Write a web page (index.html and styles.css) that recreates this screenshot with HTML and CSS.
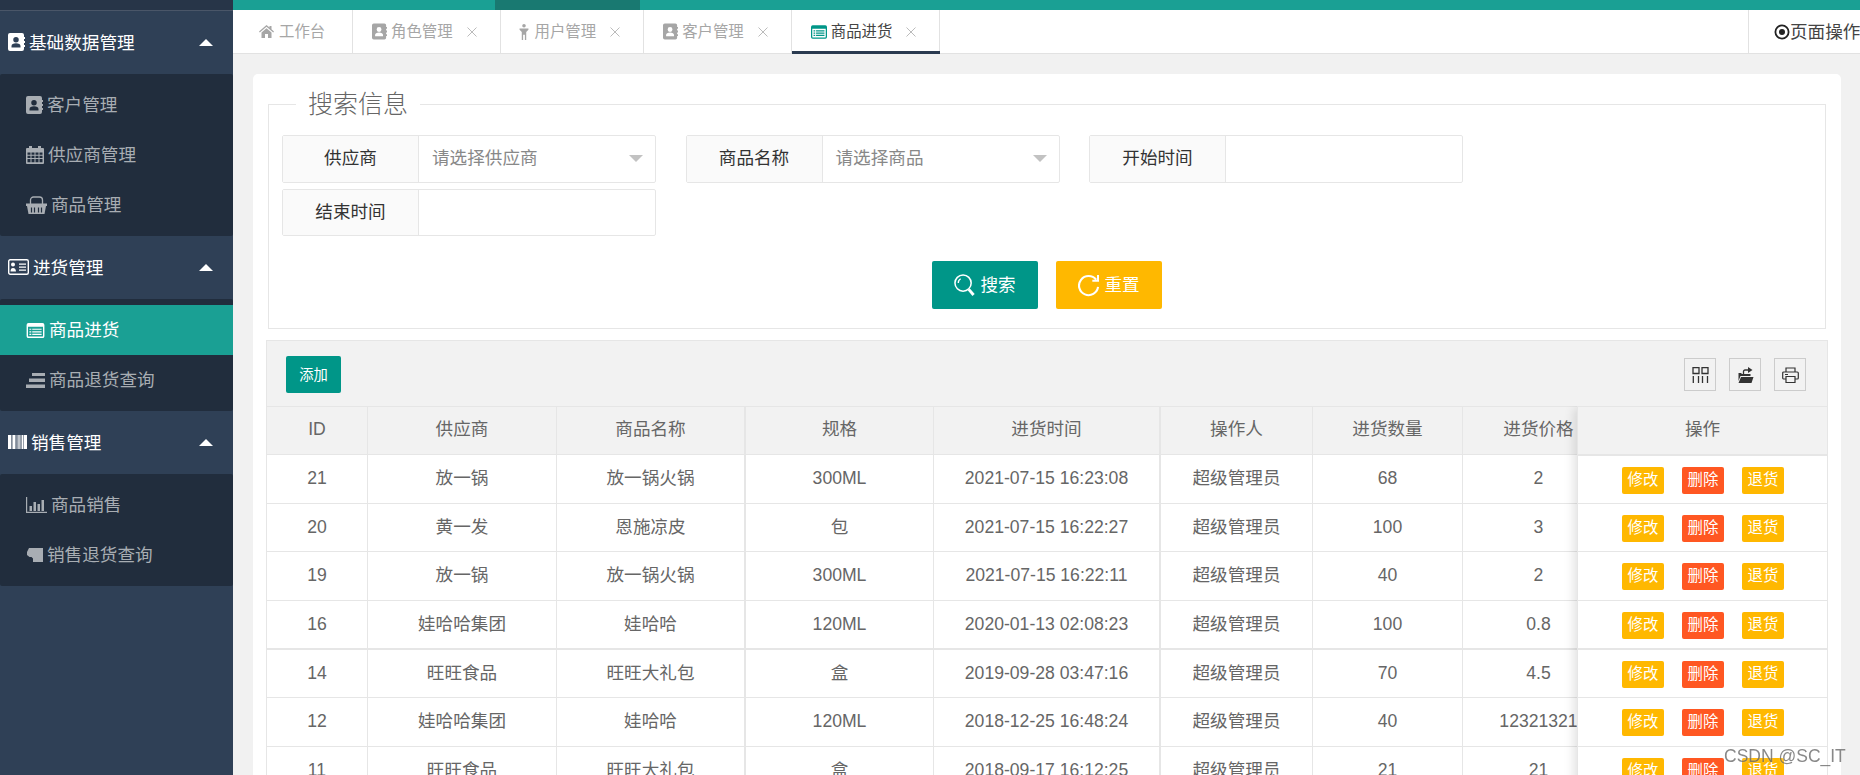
FILE: index.html
```html
<!DOCTYPE html>
<html lang="zh-CN">
<head>
<meta charset="utf-8">
<title>商品进货</title>
<link rel="stylesheet" href="styles.css">
</head>
<body>
<svg class="sprite" xmlns="http://www.w3.org/2000/svg">
  <symbol id="i-book" viewBox="0 0 17 18"><path fill-rule="evenodd" d="M2 0h12a2 2 0 0 1 2 2v2h1v2h-1v2h1v2h-1v2h1v2h-1v2a2 2 0 0 1-2 2H2a2 2 0 0 1-2-2V2a2 2 0 0 1 2-2zM8 4a2.6 2.6 0 0 0 0 5.500A2.600 2.600 0 0 0 8 4zM3.500 14.500h9V13c0-1.800-1.800-2.800-4.500-2.800S3.500 11.200 3.500 13z"/></symbol>
  <symbol id="i-cal" viewBox="0 0 18 18"><path fill-rule="evenodd" d="M3 0h3v2h6V0h3v2h2a1 1 0 0 1 1 1v14a1 1 0 0 1-1 1H1a1 1 0 0 1-1-1V3a1 1 0 0 1 1-1h2zM1.500 6.500v2.200h3V6.500zM5.500 6.500v2.200h3V6.500zM9.500 6.500v2.200h3V6.500zM13.500 6.500v2.200h3V6.500zM1.500 9.700v2.400h3V9.700zM5.500 9.700v2.400h3V9.700zM9.500 9.700v2.400h3V9.700zM13.500 9.700v2.400h3V9.700zM1.500 13.100v3.200h3v-3.200zM5.500 13.100v3.200h3v-3.200zM9.500 13.100v3.200h3v-3.200zM13.500 13.100v3.200h3v-3.200z"/></symbol>
  <symbol id="i-basket" viewBox="0 0 21 18"><path d="M0 7.500h21v2.500h-1l-1.500 8H2.500L1 10H0z"/><path d="M4.500 8V4a3 3 0 0 1 3-3h6a3 3 0 0 1 3 3v4" fill="none" stroke="currentColor" stroke-width="1.300"/><path d="M5.500 11.500v5M8.500 11.500v5M12.500 11.500v5M15.500 11.500v5" stroke="#212d3d" stroke-width="1.200"/></symbol>
  <symbol id="i-idcard" viewBox="0 0 21 16"><rect x=".7" y=".7" width="19.600" height="14.600" rx="1.500" fill="none" stroke="currentColor" stroke-width="1.400"/><path d="M3 5.500a2 2 0 1 1 4 0 2 2 0 0 1-4 0zM2.500 12.500c0-2.500 1-3.500 2.500-3.500s3 1 3 3.500zM11 4.500h7v1.300h-7zM11 7.500h7v1.300h-7zM11 10.500h7v1.300h-7z"/></symbol>
  <symbol id="i-list" viewBox="0 0 19 16"><path fill-rule="evenodd" d="M2 0h15a2 2 0 0 1 2 2v12a2 2 0 0 1-2 2H2a2 2 0 0 1-2-2V2a2 2 0 0 1 2-2zM1.500 4v9.500a1 1 0 0 0 1 1h14a1 1 0 0 0 1-1V4zM3 6h2v1.300H3zM6 6h10v1.300H6zM3 8.700h2V10H3zM6 8.700h10V10H6zM3 11.400h2v1.300H3zM6 11.400h10v1.300H6z"/></symbol>
  <symbol id="i-stack" viewBox="0 0 19 15"><path d="M6 0h13v3H6zM3 5.500h16v3.500H3zM0 11.500h19V15H0z"/></symbol>
  <symbol id="i-barcode" viewBox="0 0 19 14"><path d="M0 0h3v14H0zM3.600 0h1v14h-1zM5 0h2v14H5zM7.500 0h.7v14h-.7zM8.800 0h.7v14h-.7zM10 0h.7v14H10zM11.300 0h.7v14h-.7zM12.500 0h1v14h-1zM14 0h1.500v14H14zM16 0h3v14h-3z"/></symbol>
  <symbol id="i-chart" viewBox="0 0 21 16"><path d="M0 0h1.200v14.800H21V16H0zM3.500 9h2.500v5H3.500zM7.500 5h2.500v9H7.500zM11.500 7h2.500v7h-2.500zM15.500 3h2.500v11h-2.500z"/></symbol>
  <symbol id="i-ticket" viewBox="0 0 17 14"><path d="M3 0h14v14H7v-3.500L5.500 9H3.500L1 7V4l1-2z"/></symbol>
  <symbol id="i-home" viewBox="0 0 15 13"><path d="M7.500 0l3 2.600V1h2v3.300L15 6.500l-.8 1-6.700-5.700L.8 7.500 0 6.500zM2.500 7.500l5-4.300 5 4.300V13H9V9H6v4H2.500z"/></symbol>
  <symbol id="i-male" viewBox="0 0 10 18"><circle cx="5" cy="2" r="2"/><path d="M0 5h10v1.500L7.500 9v9H6v-6H4v6H2.500V9L0 6.500z"/></symbol>
  <symbol id="i-cols" viewBox="0 0 16 16"><path d="M.5.500h6v6h-6zM9.500.500h6v6h-6zM.8 9v7M6 9v7M10 9v7M15 9v7" fill="none" stroke="currentColor" stroke-width="1.300"/></symbol>
  <symbol id="i-export" viewBox="0 0 16 16"><path d="M1 6h3v1h9v2H3l-2 5zM3.500 10H16l-2 6H1z"/><path d="M6 7V4.500A1.500 1.500 0 0 1 7.500 3H12" fill="none" stroke="currentColor" stroke-width="1.300"/><path d="M10.500 0L15 3l-4.500 3z"/></symbol>
  <symbol id="i-print" viewBox="0 0 17 16"><path d="M4 5V1h9v4M4 12H1.500A1 1 0 0 1 .7 11V6a1 1 0 0 1 1-1h13.600a1 1 0 0 1 1 1v5a1 1 0 0 1-1 1H13M4 9.500h9v6H4zM3 7.500h3" fill="none" stroke="currentColor" stroke-width="1.200"/></symbol>
  <symbol id="i-search" viewBox="0 0 22 24"><circle cx="9.500" cy="10" r="8.500" fill="none" stroke="currentColor" stroke-width="1.600"/><path d="M4.500 10a5 5 0 0 1 2.500-4.500" fill="none" stroke="currentColor" stroke-width="1.400"/><path d="M15.500 16.500l5 6" stroke="currentColor" stroke-width="3"/></symbol>
  <symbol id="i-reset" viewBox="0 0 22 24"><path d="M19 6.500A10 10 0 1 0 21 14" fill="none" stroke="currentColor" stroke-width="2.200"/><path d="M15 7.500h6v-6" fill="none" stroke="currentColor" stroke-width="2.200"/></symbol>
  <symbol id="i-radio" viewBox="0 0 16 16"><circle cx="8" cy="8" r="6.600" fill="none" stroke="currentColor" stroke-width="1.800"/><circle cx="8" cy="8" r="3"/></symbol>
  <symbol id="i-close" viewBox="0 0 10 10"><path d="M.5.500l9 9M9.500.500l-9 9" fill="none" stroke="currentColor" stroke-width="1"/></symbol>
</svg>

<div class="app">
  <aside class="sidebar">
    <div class="brand"></div>

    <div class="group-head"><svg class="ico ico-book"><use href="#i-book"/></svg><span>基础数据管理</span><i class="caret"></i></div>
    <ul class="sub">
      <li class="sub-item"><svg class="ico ico-sub-book"><use href="#i-book"/></svg>客户管理</li>
      <li class="sub-item"><svg class="ico ico-sub-cal"><use href="#i-cal"/></svg>供应商管理</li>
      <li class="sub-item"><svg class="ico ico-sub-basket"><use href="#i-basket"/></svg>商品管理</li>
    </ul>

    <div class="group-head"><svg class="ico ico-idcard"><use href="#i-idcard"/></svg><span>进货管理</span><i class="caret"></i></div>
    <ul class="sub">
      <li class="sub-item is-active"><svg class="ico ico-sub-list"><use href="#i-list"/></svg>商品进货</li>
      <li class="sub-item"><svg class="ico ico-sub-list"><use href="#i-stack"/></svg>商品退货查询</li>
    </ul>

    <div class="group-head"><svg class="ico ico-barcode"><use href="#i-barcode"/></svg><span>销售管理</span><i class="caret"></i></div>
    <ul class="sub">
      <li class="sub-item"><svg class="ico ico-sub-chart"><use href="#i-chart"/></svg>商品销售</li>
      <li class="sub-item"><svg class="ico ico-sub-ticket"><use href="#i-ticket"/></svg>销售退货查询</li>
    </ul>
  </aside>

  <main class="main">
    <div class="topbar"><span class="topbar-active"></span></div>
    <nav class="tabs">
      <div class="tab tab-home"><svg class="tab-ico tab-ico-home"><use href="#i-home"/></svg>工作台</div>
      <div class="tab"><svg class="tab-ico tab-ico-book"><use href="#i-book"/></svg>角色管理<svg class="tab-x"><use href="#i-close"/></svg></div>
      <div class="tab tab-user"><svg class="tab-ico tab-ico-male"><use href="#i-male"/></svg>用户管理<svg class="tab-x"><use href="#i-close"/></svg></div>
      <div class="tab"><svg class="tab-ico tab-ico-book"><use href="#i-book"/></svg>客户管理<svg class="tab-x"><use href="#i-close"/></svg></div>
      <div class="tab is-current"><svg class="tab-ico tab-ico-list"><use href="#i-list"/></svg>商品进货<svg class="tab-x"><use href="#i-close"/></svg></div>
      <div class="page-ops"><svg class="ops-ico"><use href="#i-radio"/></svg>页面操作</div>
    </nav>

    <div class="content">
      <section class="card">
        <fieldset class="search">
          <legend>搜索信息</legend>
          <div class="search-grid">
            <div class="field"><label>供应商</label><div class="control">请选择供应商<i class="arrow"></i></div></div>
            <div class="field"><label>商品名称</label><div class="control">请选择商品<i class="arrow"></i></div></div>
            <div class="field"><label>开始时间</label><div class="control"></div></div>
            <div class="field"><label>结束时间</label><div class="control"></div></div>
          </div>
          <div class="search-actions">
            <button class="btn btn-teal"><svg class="btn-ico"><use href="#i-search"/></svg>搜索</button>
            <button class="btn btn-amber"><svg class="btn-ico"><use href="#i-reset"/></svg>重置</button>
          </div>
        </fieldset>

        <div class="grid-box">
          <div class="toolbar">
            <button class="add">添加</button>
            <div class="tools">
              <span class="tool"><svg><use href="#i-cols"/></svg></span>
              <span class="tool"><svg><use href="#i-export"/></svg></span>
              <span class="tool"><svg><use href="#i-print"/></svg></span>
            </div>
          </div>
          <div class="grid-body">
            <div class="row row-head"><div>ID</div><div>供应商</div><div>商品名称</div><div>规格</div><div>进货时间</div><div>操作人</div><div>进货数量</div><div>进货价格</div></div>
            <div class="row"><div>21</div><div>放一锅</div><div>放一锅火锅</div><div>300ML</div><div>2021-07-15 16:23:08</div><div>超级管理员</div><div>68</div><div>2</div></div>
            <div class="row"><div>20</div><div>黄一发</div><div>恩施凉皮</div><div>包</div><div>2021-07-15 16:22:27</div><div>超级管理员</div><div>100</div><div>3</div></div>
            <div class="row"><div>19</div><div>放一锅</div><div>放一锅火锅</div><div>300ML</div><div>2021-07-15 16:22:11</div><div>超级管理员</div><div>40</div><div>2</div></div>
            <div class="row row-strong"><div>16</div><div>娃哈哈集团</div><div>娃哈哈</div><div>120ML</div><div>2020-01-13 02:08:23</div><div>超级管理员</div><div>100</div><div>0.8</div></div>
            <div class="row"><div>14</div><div>旺旺食品</div><div>旺旺大礼包</div><div>盒</div><div>2019-09-28 03:47:16</div><div>超级管理员</div><div>70</div><div>4.5</div></div>
            <div class="row"><div>12</div><div>娃哈哈集团</div><div>娃哈哈</div><div>120ML</div><div>2018-12-25 16:48:24</div><div>超级管理员</div><div>40</div><div>12321321</div></div>
            <div class="row"><div>11</div><div>旺旺食品</div><div>旺旺大礼包</div><div>盒</div><div>2018-09-17 16:12:25</div><div>超级管理员</div><div>21</div><div>21</div></div>

            <div class="fixed-col">
              <div class="fixed-head">操作</div>
              <div class="fixed-row"><span class="act act-amber">修改</span><span class="act act-red">删除</span><span class="act act-amber">退货</span></div>
              <div class="fixed-row"><span class="act act-amber">修改</span><span class="act act-red">删除</span><span class="act act-amber">退货</span></div>
              <div class="fixed-row"><span class="act act-amber">修改</span><span class="act act-red">删除</span><span class="act act-amber">退货</span></div>
              <div class="fixed-row row-strong"><span class="act act-amber">修改</span><span class="act act-red">删除</span><span class="act act-amber">退货</span></div>
              <div class="fixed-row"><span class="act act-amber">修改</span><span class="act act-red">删除</span><span class="act act-amber">退货</span></div>
              <div class="fixed-row"><span class="act act-amber">修改</span><span class="act act-red">删除</span><span class="act act-amber">退货</span></div>
              <div class="fixed-row"><span class="act act-amber">修改</span><span class="act act-red">删除</span><span class="act act-amber">退货</span></div>
            </div>
          </div>
        </div>
      </section>
    </div>
  </main>
</div>
<div class="watermark">CSDN @SC_IT</div>
</body>
</html>
```

FILE: styles.css
```css
* { box-sizing: border-box; }
html, body { margin: 0; padding: 0; height: 100%; overflow: hidden; }
body { font-family: "Liberation Sans", "Noto Sans CJK SC", sans-serif; font-size: 17.6px; color: #666; background: #f1f1f1; }
.sprite { position: absolute; width: 0; height: 0; overflow: hidden; }
ul { list-style: none; margin: 0; padding: 0; }
svg { fill: currentColor; display: block; flex: none; }

.app { display: flex; height: 775px; }

/* sidebar */
.sidebar { width: 233px; flex: none; background: #2f4056; overflow: hidden; }
.brand { height: 11px; background: #273548; border-bottom: 1px solid #4a5668; }
.group-head { height: 63px; display: flex; align-items: center; padding: 0 0 3px 8px; color: #fff; position: relative; }
.group-head .ico { margin-top: 2px; }
.group-head span { margin-left: 4px; }
.caret { position: absolute; left: 199px; top: 28px; border: 7.5px solid transparent; border-top: 0; border-bottom: 7px solid #fff; }
.ico-book { width: 17px; height: 18px; }
.ico-idcard { width: 21px; height: 16px; }
.ico-barcode { width: 19px; height: 14px; }
.sub { background: #212d3d; padding: 6px 0; border-radius: 2px; }
.sub-item { height: 50px; display: flex; align-items: center; padding: 0 0 3px 26px; color: #a8adb3; gap: 4px; }
.sub-item .ico { margin-top: 3px; }
.sub-item.is-active { background: #1aa094; color: #fff; }
.ico-sub-book { width: 17px; height: 18px; }
.ico-sub-cal { width: 18px; height: 18px; }
.ico-sub-basket { width: 21px; height: 18px; }
.ico-sub-list { width: 19px; height: 15px; }
.ico-sub-chart { width: 21px; height: 16px; }
.ico-sub-ticket { width: 17px; height: 14px; }

/* main */
.main { flex: 1; min-width: 0; display: flex; flex-direction: column; }
.topbar { height: 10px; background: #1aa094; padding-left: 262px; flex: none; }
.topbar-active { display: block; width: 145px; height: 10px; background: #197971; }
.tabs { height: 44px; background: #fff; border-bottom: 1px solid #e2e2e2; display: flex; flex: none; font-size: 15.4px; color: #a6a6a6; position: relative; }
.tab { display: flex; align-items: center; padding: 0 23px 3px 19px; border-right: 1px solid #e2e2e2; height: 43px; white-space: nowrap; }
.tab svg { margin-top: 3px; }
.tab-home { padding: 0 26px 3px; width: 120px; }
.tab-user { padding: 0 23px 3px 18px; }
.tab-ico { margin-right: 4px; }
.tab-ico-home { width: 15px; height: 13px; margin-right: 5px; }
.tab-ico-book { width: 15px; height: 17px; }
.tab-ico-male { width: 10px; height: 16px; margin-right: 6px; }
.tab-ico-list { width: 16px; height: 14px; color: #009688; }
.tab-x { width: 10px; height: 10px; margin-left: 14px; color: #bbb; }
.tab.is-current { color: #444; position: relative; }
.tab.is-current::after { content: ""; position: absolute; left: 0; right: -1px; bottom: -1px; height: 3px; background: #2a3a50; }
.page-ops { margin-left: auto; width: 112px; display: flex; align-items: center; padding: 0 0 2px 25px; border-left: 1px solid #e2e2e2; color: #444; font-size: 17.6px; white-space: nowrap; height: 43px; }
.ops-ico { width: 16px; height: 16px; color: #222; margin-top: 2px; }

.content { flex: 1; min-height: 0; padding: 20px 19px 0 20px; overflow: hidden; }
.card { background: #fff; border-radius: 5px; padding: 0 13px 20px; height: 760px; overflow: hidden; }

/* search */
.search { margin: 14px 2px 0; padding: 15px 13px 18px; border: 1px solid #e6e6e6; min-width: 0; height: 241px; }
.search legend { margin-left: 14px; padding: 0 12px; font-size: 25px; font-weight: 300; color: #666; line-height: 32px; }
.search-grid { display: grid; grid-template-columns: repeat(3, 374px); column-gap: 29.5px; row-gap: 6px; }
.field { display: flex; height: 48px; border: 1px solid #e6e6e6; border-radius: 2px; }
.field:nth-child(4) { height: 47px; }
.field label { width: 136px; flex: none; background: #fafafa; border-right: 1px solid #e6e6e6; color: #333; text-align: center; line-height: 44px; }
.control { flex: 1; position: relative; padding-left: 13px; color: #888; line-height: 44px; }
.arrow { position: absolute; right: 12px; top: 19px; border: 7.5px solid transparent; border-bottom: 0; border-top: 7px solid #c2c2c2; }
.search-actions { display: flex; justify-content: center; gap: 18px; margin-top: 25px; }
.btn { width: 106px; height: 48px; border: 0; border-radius: 2px; color: #fff; font: inherit; display: flex; align-items: center; justify-content: center; gap: 5px; padding: 0 0 4px; }
.btn-ico { margin-top: 4px; }
.btn-teal { background: #009688; }
.btn-amber { background: #ffb800; }
.btn-ico { width: 21px; height: 24px; }

/* data grid */
.grid-box { margin-top: 11px; border: 1px solid #e6e6e6; }
.toolbar { height: 65px; background: #f2f2f2; display: flex; align-items: center; justify-content: space-between; padding: 0 21px 0 19px; }
.add { width: 55px; height: 37px; background: #009688; color: #fff; border: 0; border-radius: 2px; font: inherit; font-size: 14.3px; padding: 0 0 2px; margin-top: 2px; }
.tools { display: flex; gap: 13px; margin-top: 2px; }
.tool { width: 32px; height: 33px; border: 1px solid #ccc; display: flex; align-items: center; justify-content: center; color: #333; }
.tool svg { width: 17px; height: 16px; }

.grid-body { position: relative; overflow: hidden; height: 500px; }
.row { display: grid; grid-template-columns: 101px 189px 189px 188px 227px 152px 150px 152px; height: 48.6px; border-top: 1px solid #e6e6e6; align-items: stretch; text-align: center; background: #fff; }
.row > div { border-right: 1px solid #e6e6e6; line-height: 47px; white-space: nowrap; }
.row > div:nth-child(3), .row > div:nth-child(5) { border-right-width: 2px; }
.row-head { background: #f2f2f2; height: 48px; }
.row.row-head > div { line-height: 45px; }
.row-strong + .row { border-top-width: 2px; }

.fixed-col { position: absolute; top: 0; right: 0; width: 250px; background: #fff; border-left: 1px solid #e6e6e6; box-shadow: -5px 0 10px -2px rgba(0,0,0,.12); }
.fixed-head { height: 48px; background: #f2f2f2; border-top: 1px solid #e6e6e6; text-align: center; line-height: 45px; }
.fixed-row { height: 48.6px; border-top: 1px solid #e6e6e6; display: flex; align-items: center; gap: 18px; padding: 2px 0 0 44px; }
.fixed-head + .fixed-row { border-top-width: 2px; }
.row-strong + .fixed-row { border-top-width: 2px; }
.act { width: 42px; height: 27px; border-radius: 2px; color: #fff; font-size: 15.4px; line-height: 26px; text-align: center; }
.act-amber { background: #ffb800; }
.act-red { background: #ff5722; }

.watermark { position: fixed; left: 1724px; top: 745px; font-size: 17.5px; line-height: 22px; color: rgba(90,90,90,.72); text-shadow: 0 0 2px rgba(255,255,255,.5); }
```
